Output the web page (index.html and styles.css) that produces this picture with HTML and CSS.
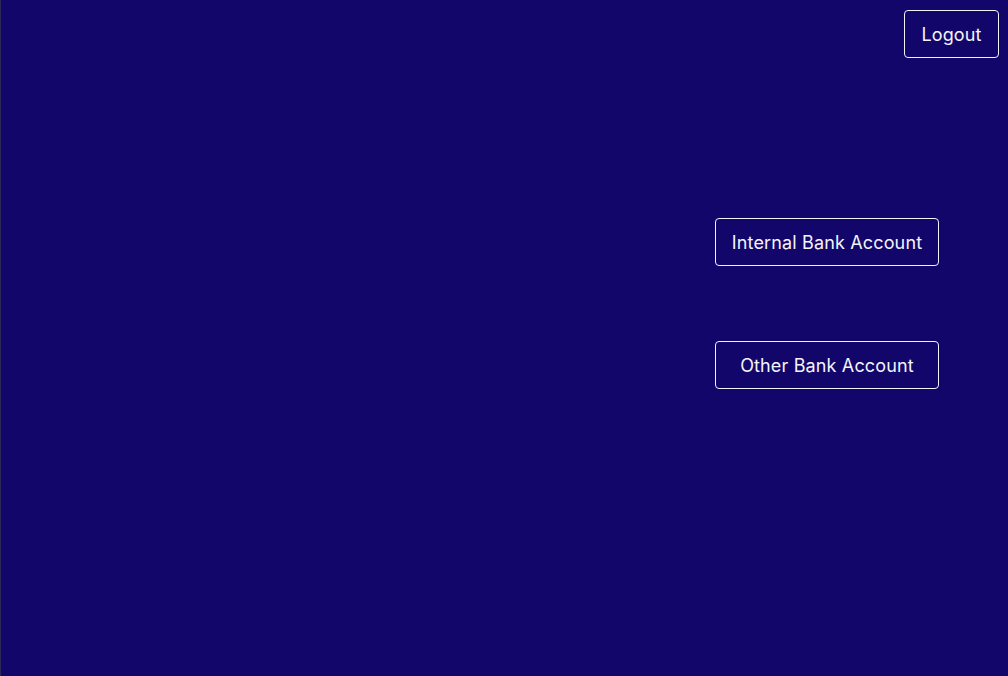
FILE: index.html
```html
<!DOCTYPE html>
<html lang="en">
<head>
<meta charset="utf-8">
<title>Transfer</title>
<link rel="stylesheet" href="styles.css">
</head>
<body>
<div class="page">
  <header class="topbar">
    <button class="btn btn-logout">Logout</button>
  </header>
  <main class="actions">
    <button class="btn btn-wide">Internal Bank Account</button>
    <button class="btn btn-wide">Other Bank Account</button>
  </main>
</div>
</body>
</html>
```
FILE: styles.css
```css
html, body {
  margin: 0;
  padding: 0;
  height: 100%;
}
body {
  background: #12066b;
  font-family: Inter, "Noto Sans", sans-serif;
}
.page {
  box-sizing: border-box;
  height: 100%;
  border-left: 1px solid #2a2a55;
  display: flex;
  flex-direction: column;
}
.topbar {
  display: flex;
  justify-content: flex-end;
  padding: 10px 9px 0 0;
}
.btn {
  box-sizing: border-box;
  height: 48px;
  background: transparent;
  color: #f4f4f8;
  border: 1px solid #f2f2f7;
  border-radius: 4px;
  font-family: Inter, "Noto Sans", sans-serif;
  font-size: 18px;
  letter-spacing: 0.15px;
  padding: 0;
  cursor: pointer;
}
.btn-logout {
  width: 95px;
}
.actions {
  display: flex;
  flex-direction: column;
  align-items: flex-end;
  gap: 75px;
  padding: 160px 69px 0 0;
}
.btn-wide {
  width: 224px;
}
```
